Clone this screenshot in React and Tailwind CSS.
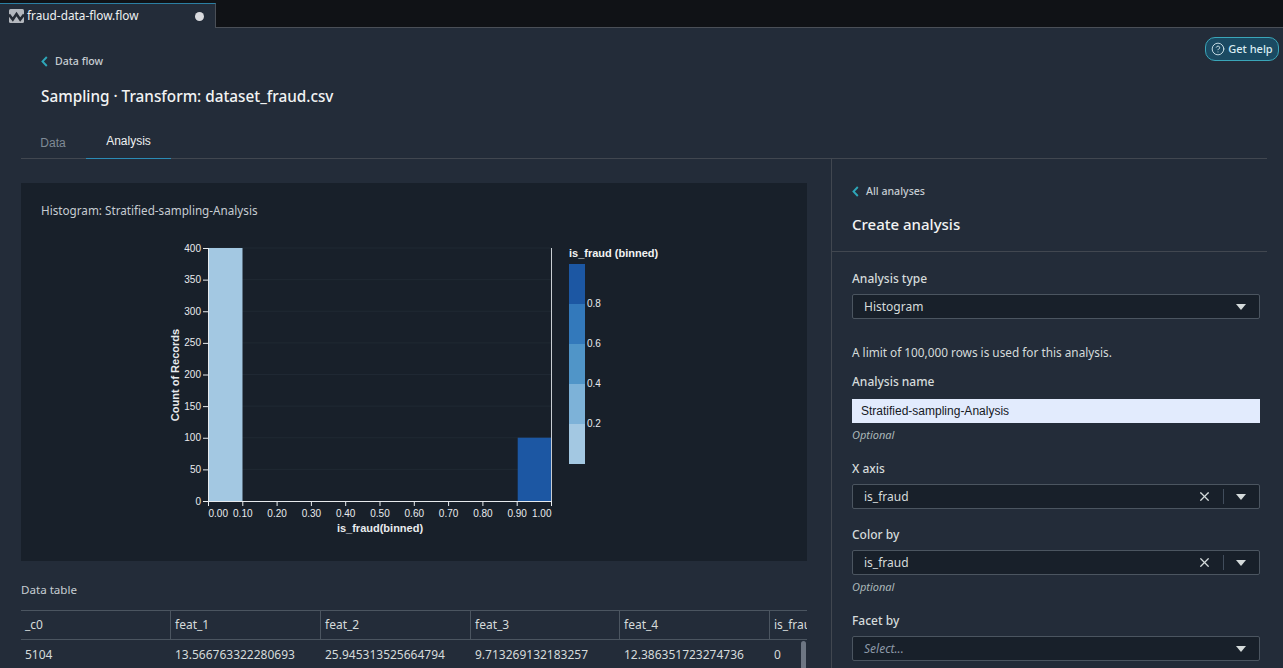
import React from 'react'
import { X, CircleHelp } from 'lucide-react'

const yTicks = [0, 50, 100, 150, 200, 250, 300, 350, 400]
const xTicks = ['0.00', '0.10', '0.20', '0.30', '0.40', '0.50', '0.60', '0.70', '0.80', '0.90', '1.00']
const legendColors = ['#1c57a3', '#3379bb', '#5095c8', '#7db2d8', '#a3c8e2']
const legendLabels = ['0.8', '0.6', '0.4', '0.2']

const columns = [
  { name: '_c0', value: '5104', width: 'w-[150px]' },
  { name: 'feat_1', value: '13.566763322280693', width: 'w-[150px]' },
  { name: 'feat_2', value: '25.945313525664794', width: 'w-[150px]' },
  { name: 'feat_3', value: '9.713269132183257', width: 'w-[149px]' },
  { name: 'feat_4', value: '12.386351723274736', width: 'w-[150px]' },
  { name: 'is_fraud', value: '0', width: 'w-[37px]' }
]

const Caret = () => (
  <svg width="12" height="8" viewBox="0 0 12 8" className="shrink-0">
    <path d="M1 1h10L6 7z" fill="#d5dbdb" />
  </svg>
)

const BackChevron = () => (
  <svg width="7" height="11" viewBox="0 0 7 11" className="shrink-0">
    <path d="M5.8 1 1.5 5.5l4.3 4.5" fill="none" stroke="#2ea6b8" strokeWidth="1.9" />
  </svg>
)

const Histogram = () => {
  const yAt = (v) => 501 - (v / 400) * 253
  const xAt = (i) => 208.5 + i * 34.3
  return (
    <svg width="786" height="378" viewBox="21 183 786 378" className="block font-['Liberation_Sans',sans-serif]">
      {yTicks.slice(1).map((t) => (
        <line key={t} x1="208" x2="551" y1={yAt(t)} y2={yAt(t)} stroke="#1f2833" />
      ))}
      <rect x="208.5" y="248" width="34" height="253" fill="#a3c8e2" />
      <rect x="517.7" y="437.7" width="33.6" height="63.3" fill="#1c57a3" />
      <line x1="208.5" x2="208.5" y1="248" y2="501" stroke="#e8ebee" />
      <line x1="551.5" x2="551.5" y1="248" y2="501" stroke="#c9ced3" />
      <line x1="208" x2="552" y1="501.5" y2="501.5" stroke="#e8ebee" />
      {yTicks.map((t) => (
        <g key={t}>
          <line x1="203" x2="208" y1={yAt(t) + 0.5} y2={yAt(t) + 0.5} stroke="#e8ebee" />
          <text x="201" y={yAt(t) + 3.5} textAnchor="end" fontSize="10" fill="#e8ebee">{t}</text>
        </g>
      ))}
      {xTicks.map((t, i) => (
        <g key={t}>
          <line x1={xAt(i)} x2={xAt(i)} y1="501" y2="506" stroke="#e8ebee" />
          <text
            x={i === 0 ? 208.5 : i === 10 ? 551.5 : xAt(i)}
            y="517"
            textAnchor={i === 0 ? 'start' : i === 10 ? 'end' : 'middle'}
            fontSize="10"
            fill="#e8ebee"
          >
            {t}
          </text>
        </g>
      ))}
      <text x="380" y="532" textAnchor="middle" fontSize="11" fontWeight="700" fill="#e8ebee">is_fraud(binned)</text>
      <text x="0" y="0" transform="translate(179 375) rotate(-90)" textAnchor="middle" fontSize="11" fontWeight="700" fill="#e8ebee">Count of Records</text>
      <text x="569" y="257" fontSize="11" fontWeight="700" fill="#f2f3f3">is_fraud (binned)</text>
      {legendColors.map((c, i) => (
        <rect key={c} x="569" y={264 + i * 40} width="16" height="40" fill={c} />
      ))}
      {legendLabels.map((l, i) => (
        <text key={l} x="587" y={307 + i * 40} fontSize="10" fill="#e8ebee">{l}</text>
      ))}
    </svg>
  )
}

const Field = ({ label, value, clearable, placeholder, hint, className = '' }) => (
  <div className={className}>
    <div className="text-[12px] leading-4 text-[#d5dbdb] font-medium">{label}</div>
    <div className="mt-[7px] flex h-[25px] items-center rounded-[2px] border border-[#4b5560] bg-[#18202a] pl-[11px] pr-[12px]">
      <span className={placeholder ? 'text-[12px] italic text-[#8d99a8]' : 'text-[12px] text-[#d5dbdb]'}>
        {value || placeholder}
      </span>
      <div className="ml-auto flex items-center">
        {clearable && (
          <>
            <X size={15} strokeWidth={2} color="#d5dbdb" />
            <span className="ml-[11px] mr-[11px] h-[15px] w-px bg-[#414d5c]" />
          </>
        )}
        <Caret />
      </div>
    </div>
    {hint && <div className="mt-[4px] text-[11px] leading-4 italic text-[#aab7b8]">{hint}</div>}
  </div>
)

export default function App() {
  return (
    <div className="h-[668px] w-[1283px] overflow-hidden bg-[#232c39] font-['Noto_Sans',sans-serif] text-[#d5dbdb]">
      {/* tab strip */}
      <div className="flex h-[28px] bg-[#101216]">
        <div className="mt-[3px] flex h-[25px] w-[216px] items-center border-t border-r border-t-[#2b7fa3] border-r-[#4a4f57] bg-[#232c39] pl-[9px]">
          <svg width="15" height="14" viewBox="0 0 15 14" className="shrink-0">
            <rect width="15" height="14" rx="1.5" fill="#b4b8be" />
            <path d="M0 5.5 3.8 10.5 7.5 5 11.2 10.5 15 5.5" fill="none" stroke="#262c35" strokeWidth="2.6" />
          </svg>
          <span className="ml-[3px] text-[11.8px] text-[#eef0f1]">fraud-data-flow.flow</span>
          <span className="ml-[57px] h-[9px] w-[9px] rounded-full bg-[#d8dade]" />
        </div>
        <div className="flex-1 border-b border-[#4a4f57]" />
      </div>

      {/* page header */}
      <div className="relative mx-[21px] mr-[16px] h-[131px] border-b border-[#414750]">
        <div className="flex items-center pl-[20px] pt-[25px] text-[10.6px] leading-4 text-[#c6ccd2]">
          <BackChevron />
          <span className="ml-[7px] font-medium">Data flow</span>
        </div>
        <h1 className="ml-[20px] mt-[15px] text-[15.3px] leading-6 font-medium text-[#f2f3f3]">
          Sampling · Transform: dataset_fraud.csv
        </h1>
        <div className="absolute bottom-[-1px] left-0 flex font-['Liberation_Sans',sans-serif] text-[12px]">
          <div className="flex h-[32px] w-[65px] items-center justify-center pr-[1px] text-[#7f8a95]">Data</div>
          <div className="flex h-[32px] w-[85px] items-center justify-center border-b border-[#2b8bb5] pb-[3px] text-[#eef0f1]">Analysis</div>
        </div>
        <button className="absolute right-[-12px] top-[9px] flex h-[24px] w-[74px] items-center justify-center gap-[3px] rounded-[10px] border border-[#3aa6b9] bg-[#1b4a62] text-[11px] font-medium text-[#d9ecf2]">
          <CircleHelp size={14} strokeWidth={1.5} />
          Get help
        </button>
      </div>

      <div className="flex h-[509px]">
        {/* chart and table */}
        <div className="w-[832px] shrink-0 border-r border-[#414750] pl-[21px] pt-[24px]">
          <div className="relative w-[786px] bg-[#18202a]">
            <div className="absolute left-[20px] top-[19px] text-[11.7px] leading-4 text-[#c6ccd2]">
              Histogram: Stratified-sampling-Analysis
            </div>
            <Histogram />
          </div>
          <div className="mt-[21px] text-[11.6px] leading-4 text-[#c6ccd2]">Data table</div>
          <div className="relative mt-[12px] h-[70px] w-[786px] overflow-hidden border-t border-[#4b5560] text-[12px] text-[#d5dbdb]">
            <div className="flex h-[29px] border-b border-[#4b5560]">
              {columns.map((c, i) => (
                <div
                  key={c.name}
                  className={`${c.width} flex shrink-0 items-center overflow-hidden whitespace-nowrap pl-[4px] ${i < 5 ? 'border-r border-[#4b5560]' : ''}`}
                >
                  {c.name}
                </div>
              ))}
            </div>
            <div className="flex h-[29px]">
              {columns.map((c) => (
                <div key={c.name} className={`${c.width} flex shrink-0 items-center whitespace-nowrap pl-[4px]`}>
                  {c.value}
                </div>
              ))}
            </div>
            <div className="absolute right-[1px] top-[30px] h-[40px] w-[5px] rounded-full bg-[#6d7683]" />
          </div>
        </div>

        {/* create analysis panel */}
        <div className="w-[435px] shrink-0">
          <div className="border-b border-[#414750] pb-[15px] pl-[16px] pt-[24px]">
            <div className="flex items-center pl-[4px] text-[10.6px] leading-4 text-[#c6ccd2]">
              <BackChevron />
              <span className="ml-[7px] font-medium">All analyses</span>
            </div>
            <div className="ml-[4px] mt-[13px] text-[15px] leading-6 font-medium text-[#f2f3f3]">Create analysis</div>
          </div>
          <div className="w-[428px] pl-[20px] pt-[19px]">
            <Field label="Analysis type" value="Histogram" />
            <div className="mt-[25px] text-[11.8px] leading-4 text-[#d5dbdb]">A limit of 100,000 rows is used for this analysis.</div>
            <div className="mt-[14px] text-[12px] leading-4 font-medium text-[#d5dbdb]">Analysis name</div>
            <div className="mt-[9px] flex h-[24px] items-center bg-[#e2ebfd] pl-[9px] font-['Liberation_Sans',sans-serif] text-[12px] text-[#16191f]">
              Stratified-sampling-Analysis
            </div>
            <div className="mt-[4px] text-[11px] leading-4 italic text-[#aab7b8]">Optional</div>
            <Field className="mt-[18px]" label="X axis" value="is_fraud" clearable />
            <Field className="mt-[18px]" label="Color by" value="is_fraud" clearable hint="Optional" />
            <Field className="mt-[18px]" label="Facet by" placeholder="Select..." />
          </div>
        </div>
      </div>
    </div>
  )
}
